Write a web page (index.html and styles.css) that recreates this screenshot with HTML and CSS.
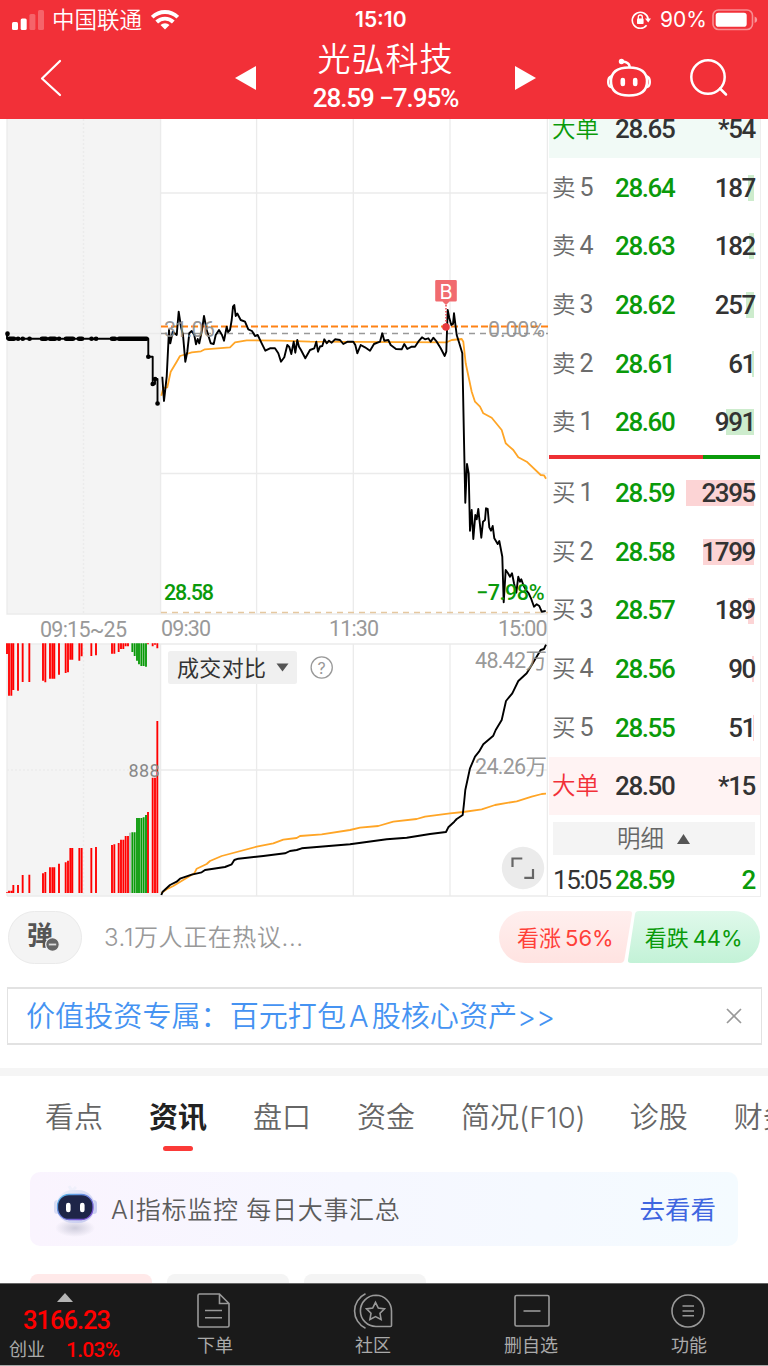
FILE: index.html
```html
<!DOCTYPE html>
<html lang="zh-CN">
<head>
  <meta charset="utf-8">
  <title>光弘科技</title>
  <link rel="stylesheet" href="styles.css">
</head>
<body>
  <header class="header">
    <div class="status">
      <svg class="signal" width="32" height="20" viewBox="0 0 32 20" fill="#fff">
        <rect x="0" y="12" width="6" height="8" rx="1.5"/>
        <rect x="8.7" y="8.5" width="6" height="11.5" rx="1.5"/>
        <rect x="17.4" y="4" width="6" height="16" rx="1.5" opacity=".25"/>
        <rect x="26" y="0" width="6" height="20" rx="1.5" opacity=".25"/>
      </svg>
      <span class="carrier">中国联通</span>
      <svg class="wifi" width="28" height="21" viewBox="0 0 28 21" fill="none" stroke="#fff" stroke-width="3.9">
        <path d="M1.2 8.2A18.3 18.3 0 0 1 26.8 8.2"/>
        <path d="M5.7 13A11.8 11.8 0 0 1 22.3 13"/>
        <path d="M14 20.5L9.5 16A6.4 6.4 0 0 1 18.5 16Z" fill="#fff" stroke="none"/>
      </svg>
      <span class="clock">15:10</span>
      <svg class="lock" width="20" height="20" viewBox="0 0 20 20" fill="none" stroke="#fff" stroke-width="1.6">
        <path d="M15.6 15.2A8 8 0 1 1 17.2 9"/>
        <path d="M14 8.6h6L17.2 12.6z" fill="#fff" stroke="none"/>
        <rect x="6" y="8.6" width="6.6" height="5.4" rx=".8" fill="#fff" stroke="none"/>
        <path d="M7.3 9V7a2 2 0 0 1 4 0v2" stroke-width="1.3"/>
      </svg>
      <span class="percent">90%</span>
      <svg class="battery" width="46" height="22" viewBox="0 0 46 22">
        <rect x="1" y="1" width="39.5" height="19.5" rx="5.5" fill="none" stroke="#fff" stroke-width="1.6" opacity=".45"/>
        <rect x="3.7" y="3.7" width="31" height="14" rx="2.8" fill="#fff"/>
        <path d="M42.6 7.5q2.6 1 2.6 3.3t-2.6 3.3z" fill="#fff" opacity=".5"/>
      </svg>
    </div>
    <div class="nav">
      <svg class="back" width="22" height="38" viewBox="0 0 22 38" fill="none" stroke="#fff" stroke-width="2.2" stroke-linecap="round" stroke-linejoin="round"><path d="M20 2L2 19.5 20 36"/></svg>
      <svg class="prev" width="21" height="24" viewBox="0 0 21 24" fill="#fff"><path d="M0 12L21 0V24z"/></svg>
      <div class="stock">
        <div class="stock-name">光弘科技</div>
        <div class="stock-price">28.59 −7.95%</div>
      </div>
      <svg class="next" width="21" height="24" viewBox="0 0 21 24" fill="#fff"><path d="M21 12L0 0V24z"/></svg>
      <svg class="robot" width="44" height="40" viewBox="0 0 44 40" fill="none" stroke="#fff" stroke-width="2.5" stroke-linecap="round">
        <path d="M22 9.500C34 9.500 40 14 40 23.500S34 37.500 22 37.500 4 33 4 23.500 10 9.500 22 9.500Z"/>
        <path d="M22.500 9V8Q22 4.500 16 3.500"/>
        <circle cx="14.500" cy="3.500" r="2.700" fill="#fff" stroke="none"/>
        <path d="M4 18.500Q1.200 19.500 1.200 24T4 29M40 18.500Q42.800 19.500 42.800 24T40 29" stroke-width="2.400"/>
        <path d="M15.800 22v4M28.200 22v4" stroke-width="4.600"/>
      </svg>
      <svg class="search" width="38" height="38" viewBox="0 0 38 38" fill="none" stroke="#fff" stroke-width="2.5" stroke-linecap="round"><circle cx="18" cy="18" r="16.700"/><path d="M30 29.500L36 35.500"/></svg>
    </div>
  </header>

  <main class="market">
    <svg class="chart" width="548" height="778" viewBox="0 119 548 778">
      <!-- grid -->
      <rect x="7" y="119" width="154" height="495" fill="#f4f4f4"/>
      <rect x="7" y="644" width="154" height="252" fill="#f4f4f4"/>
      <g fill="none" stroke="#ebebeb" stroke-width="1.300">
        <path d="M7 119V614H548M7 333.500H161M161 193H548M161 473.500H548M160.600 119V614M256.600 119V614M353.300 119V614M450 119V614M547.400 119V896"/>
        <path d="M7 896V644H548M7 896H548M161 770H548M160.600 644V896M256.600 644V896M353.300 644V896M450 644V896"/>
        <path d="M83.500 119V614M83.500 644V896M7 770H161" stroke-dasharray="2 2"/>
      </g>

      <!-- call auction -->
      <path d="M7 333V338.800H148.300V356.800H152.700V384H155V379H157.500V403.500" class="line"/>
      <path d="M7.500 333.500V334M9 338.800H14M18 338.800h.1M22.700 338.800h.1M29.500 338.800h.1M42 338.800H46M50 338.800H55M59 338.800h.1M66 338.800H73M79 338.800H82M91.500 338.800h.1M96 338.800h.1M112 338.800H115M119 338.800H146.500M148.300 356.800h.1M152.700 384h.1M155 379h.1M157.500 403.500h.1" class="dots"/>

      <!-- average and price -->
      <path class="dash-orange" d="M161 326.500H548"/>
      <path class="dash-gray" d="M161 333.500H548"/>
      <path class="dash-low" d="M161 612.500H548"/>
      <path class="avg" d="M161.300 395.700L163.300 388 167.300 387.300 170.700 371.700 176.700 361.700 180 356 186.700 354 191.700 352.300 201 351.300 205 349.300 230 347.300 235 342.300 246.700 340.300 280 340.700 310 341.700 446.700 342.300 451.700 340 461.700 339 463.300 341.700 465.700 363.300 471.700 391.700 475 401.700 480 406.700 483.300 413.300 491.700 417.700 501.700 430 505.700 443.300 513.300 450 518.300 457.300 526.700 461.700 540.700 475 544 475.300 546 478.700"/>
      <path class="line" d="M162.300 376.700L164 401 166.700 376.700 169 330 170.300 343.300 172.700 331.700 176.700 335 178.700 311.700 181 327 183 335 185.300 361.700 187.300 351.700 189.300 333.300 191.700 331 194.300 335 196 344.300 197.700 339 199.300 343.300 202 330 204 316 206.700 330 208.700 336.700 210.700 343.300 213.700 344 215.700 335 219 330 222 335 224 340.700 226.700 326.700 228 332 230 330 231.700 320 233 306.700 234.300 305 235.700 316 237.300 313.500 240.700 320 245 321.700 248.300 329.300 252 331 255 336 257.700 335 261.700 343.300 265.300 350.700 270 348.300 275 348.300 278.300 353.300 281 361.700 284.300 357.300 287.300 345 289.300 347 291.300 354 293.700 341.700 295.300 352.700 297.300 340 299 346.700 301 350 305.300 358.300 310 350 314.300 348.300 316.300 341.700 318 351.700 320 346.500 322.300 346 324.300 339.300 326.700 343.300 329 340.700 331.700 342.700 335 339.300 340 340 343.300 344 347.700 341.700 353.300 341.700 355.300 345 357.300 353.300 360.700 345 365 347.300 370 350.700 374 344 380 341.700 382.300 333.300 384.300 340.700 388.300 340 390.700 345 396 349 401.700 349.300 404.300 344 407.300 349 411.700 346.700 415 346.700 418.300 341.700 422 337.300 425 339.300 428.300 338.300 430.700 341.700 433.300 337.700 436.700 341.700 440.700 348.300 444.700 356 446.300 351.700 447.700 310 449.300 318 451.300 325 453 324 454 313.300 456.700 335 459.300 343.300 462.300 353.300 464 440 465.300 502.700 467 464 468.700 473.300 470 530.700 471.700 510 473.300 539 475.300 515 476.700 519.300 478.300 509 481.300 537.700 483 521.700 485 520 486 508.300 487.700 509 489.300 527.300 491 530.700 492.700 526 494.300 538.300 497.700 544 499.300 541 502.300 556.700 503.700 602.300 505.700 570 508 573.300 510 576.700 512 573.300 514 583.300 516.300 592.700 518.300 576.700 520 581.700 521.300 579.300 523.300 585 526 590 528.700 593.300 531 598.300 534 606.700 536.700 604.300 539.300 606 541.700 611.700 545.700 611"/>
      <text x="164" y="337" textLength="51" class="axis over">31.06</text>
      <text x="488" y="337" textLength="57" class="axis over">0.00%</text>
      <text x="164" y="600" textLength="50" class="axis fall">28.58</text>
      <text x="476" y="600" textLength="68.500" class="axis fall">−7.98%</text>

      <!-- buy mark -->
      <path d="M446 305V325" stroke="#e8414a" stroke-width="1.500" stroke-dasharray="1.500 1.500"/>
      <path d="M436.500 280h19q1.300 0 1.300 1.300v19q0 1.300-1.300 1.300h-6l-3.500 3.400-3.500-3.400h-6q-1.300 0-1.300-1.300v-19q0-1.300 1.300-1.300z" fill="#f16b6f"/>
      <circle cx="446" cy="327" r="3.800" fill="#e63a3e"/>
      <text x="446" y="298.500" class="mark">B</text>

      <text x="40" y="637" textLength="87" class="axis">09:15~25</text>
      <text x="161" y="636" textLength="50" class="axis">09:30</text>
      <text x="329" y="636" textLength="50" class="axis">11:30</text>
      <text x="498" y="636" textLength="49.500" class="axis">15:00</text>

      <!-- auction volume, drawn at triple scale -->
      <g transform="translate(0 610) scale(.33333)" fill="none" stroke-width="5.600">
        <path stroke="#f00" d="M21 100V132M27 100V257M34 100V257M40 100V240M54 100V242M68 100V216M88 100V216M129 100V212M136 100V217M150 100V206M157 100V206M163 100V206M177 100V194M197 100V189M204 100V187M211 100V149M217 100V149M238 100V152M245 100V139M274 100V138M288 100V136M336 100V131M343 100V131M356 100V126M363 100V117M370 100V117M377 100V109M384 100V109M444 100V103M458 100V109M465 100V104M472 100V115"/>
        <path stroke="#0a9a0a" d="M397 100V126M404 100V138M411 100V152M417 100V163M424 100V168M431 100V168M438 100V170"/>
        <path stroke="#f00" d="M21 849V847M27 849V842M34 849V842M40 849V825M54 849V825M68 849V795M88 849V794M129 849V790M136 849V786M150 849V772M157 849V772M163 849V772M177 849V761M197 849V757M204 849V752M211 849V714M217 849V714M238 849V714M245 849V714M274 849V714M288 849V711M336 849V705M343 849V703M356 849V699M363 849V689M370 849V689M377 849V678M384 849V678M444 849V606M458 849V503M465 849V503M472 849V333"/>
        <path stroke="#bbb" d="M390 849V668"/>
        <path stroke="#0a9a0a" d="M397 849V667M404 849V667M411 849V624M417 849V624M424 849V624M431 849V622M438 849V615"/>
      </g>
      <text x="128.500" y="777" textLength="31" class="axis small">888</text>

      <!-- volume comparison -->
      <path class="avg" d="M161.300 893L166.700 889.300 173.300 886 194.300 873.300 196.700 868.700 206.700 864 210 861 221.700 856 256.700 846.700 273.300 843.300 283.300 839.700 296.700 838 300 836 321.700 834.300 350 830 360 827.700 378.300 826 393.300 821.700 416.700 819 425 816.700 450 813.300 463.300 812 481.700 809.300 495 805 516.700 801.300 531.700 796.700 541.700 794 546 793.700"/>
      <path class="line" d="M161.300 895L162.700 891.700 170 885 176.700 881.700 180 878.700 191.700 874.700 201.700 872.300 205 870 225 867 231.700 864.300 234.300 860 238.300 858.700 263.300 856 285 853.300 290 851 296.700 850 301.700 848.300 350 844.300 386.700 839.300 406.700 837.700 430 834 446 832 448.300 827.300 454.300 821.700 456.700 819 462.700 815 464 803.300 465.300 790 470 768.300 475 756.700 479 751.700 483.300 744.300 493.300 735.700 495.700 730 501.700 720 506 701 512.300 693.300 518.300 681 526.700 673.300 531.700 665 540.700 650 544 649 546 644.700"/>
      <text x="475" y="667.500" textLength="72" class="axis over">48.42万</text>
      <text x="475" y="774" textLength="72" class="axis over">24.26万</text>

      <rect x="168" y="651" width="129" height="33" rx="2.500" fill="#f0f0f0"/>
      <text x="177" y="676" textLength="89" class="pick">成交对比</text>
      <path d="M276.500 663.500h12l-6 8z" fill="#555"/>
      <circle cx="321.700" cy="667.500" r="10.600" fill="none" stroke="#999" stroke-width="1.300"/>
      <text x="321.700" y="673.500" class="help">?</text>

      <circle cx="523" cy="868" r="21.200" fill="#ebebeb"/>
      <path d="M512.500 867V858.500H522.300M524.300 877.800H533V869" fill="none" stroke="#666" stroke-width="2.200"/>
    </svg>

    <section class="book">
      <div class="row big-sell"><span class="label">大单</span><span class="price">28.65</span><span class="vol">*54</span></div>
      <div class="row sell"><span class="label">卖<i>5</i></span><span class="price">28.64</span><span class="vol">187</span><b class="depth" style="width:6px"></b></div>
      <div class="row sell"><span class="label">卖<i>4</i></span><span class="price">28.63</span><span class="vol">182</span><b class="depth" style="width:5px"></b></div>
      <div class="row sell"><span class="label">卖<i>3</i></span><span class="price">28.62</span><span class="vol">257</span><b class="depth" style="width:8px"></b></div>
      <div class="row sell"><span class="label">卖<i>2</i></span><span class="price">28.61</span><span class="vol">61</span><b class="depth" style="width:2px"></b></div>
      <div class="row sell"><span class="label">卖<i>1</i></span><span class="price">28.60</span><span class="vol">991</span><b class="depth" style="width:28px"></b></div>
      <div class="ratio"><span class="ratio-buy" style="width:73%"></span></div>
      <div class="row buy"><span class="label">买<i>1</i></span><span class="price">28.59</span><span class="vol">2395</span><b class="depth" style="width:68px"></b></div>
      <div class="row buy"><span class="label">买<i>2</i></span><span class="price">28.58</span><span class="vol">1799</span><b class="depth" style="width:51px"></b></div>
      <div class="row buy"><span class="label">买<i>3</i></span><span class="price">28.57</span><span class="vol">189</span><b class="depth" style="width:6px"></b></div>
      <div class="row buy"><span class="label">买<i>4</i></span><span class="price">28.56</span><span class="vol">90</span><b class="depth" style="width:2px"></b></div>
      <div class="row buy"><span class="label">买<i>5</i></span><span class="price">28.55</span><span class="vol">51</span><b class="depth" style="width:1px"></b></div>
      <div class="row big-buy"><span class="label">大单</span><span class="price">28.50</span><span class="vol">*15</span></div>
      <div class="detail"><span>明细</span><svg width="13" height="10" viewBox="0 0 13 10"><path d="M6.500 0L13 10H0z" fill="#555"/></svg></div>
      <div class="row tick"><span class="label">15:05</span><span class="price">28.59</span><span class="vol">2</span></div>
    </section>
  </main>

  <section class="talk">
    <div class="danmu">
      <span class="danmu-text">弹</span>
      <svg class="danmu-off" width="15" height="15" viewBox="0 0 15 15"><circle cx="7.500" cy="7.500" r="6.800" fill="#666" stroke="#f4f4f4" stroke-width="1.200"/><path d="M3.800 7.500h7.400" stroke="#ddd" stroke-width="1.800"/></svg>
    </div>
    <span class="talk-text">3.1万人正在热议...</span>
    <div class="vote">
      <svg class="vote-bg" width="261" height="52" viewBox="0 0 261 52">
        <defs>
          <linearGradient id="up" x1="0" y1="0" x2="0" y2="1"><stop offset="0" stop-color="#ffefee"/><stop offset="1" stop-color="#ffe3e1"/></linearGradient>
          <linearGradient id="down" x1="0" y1="0" x2="0" y2="1"><stop offset="0" stop-color="#e0f9eb"/><stop offset="1" stop-color="#c3f2d7"/></linearGradient>
        </defs>
        <path fill="url(#up)" d="M26 0H130Q133.500 0 133 3L125.500 48Q125 52 121 52H26A26 26 0 0 1 26 0z"/>
        <path fill="url(#down)" d="M140 0H235A26 26 0 0 1 235 52H132Q128.500 52 129 49L136 3Q136.500 0 140 0z"/>
      </svg>
      <span class="vote-up">看涨<i>56%</i></span>
      <span class="vote-down">看跌<i>44%</i></span>
    </div>
  </section>

  <div class="ad">
    <span class="ad-text">价值投资专属：百元打包<i>A</i>股核心资产&gt;&gt;</span>
    <svg width="16" height="16" viewBox="0 0 16 16" stroke="#999" stroke-width="1.700"><path d="M1 1L15 15M15 1L1 15"/></svg>
  </div>

  <nav class="tabs">
    <span>看点</span><span class="active">资讯</span><span>盘口</span><span>资金</span><span class="wide">简况(F10)</span><span>诊股</span><span>财务</span>
  </nav>

  <div class="ai">
    <svg width="46" height="56" viewBox="0 0 46 56">
      <defs>
        <linearGradient id="head" x1="0" y1="0" x2="1" y2="1"><stop offset="0" stop-color="#eef1fb"/><stop offset="1" stop-color="#c3c7ee"/></linearGradient>
        <linearGradient id="rim" x1="0" y1="0" x2="1" y2="1"><stop offset="0" stop-color="#57b9e8"/><stop offset="1" stop-color="#7d3fd0"/></linearGradient>
        <radialGradient id="shade"><stop offset="0" stop-color="#ceccdc"/><stop offset="1" stop-color="#ceccdc" stop-opacity="0"/></radialGradient>
      </defs>
      <ellipse cx="21" cy="47" rx="20" ry="9" fill="url(#shade)"/>
      <path d="M18 10L15 5M18 10L22 6" stroke="#f0f0fb" stroke-width="3"/>
      <rect x="0" y="19" width="7" height="14" rx="3.500" fill="#d8dcf5"/>
      <rect x="36" y="19" width="7" height="14" rx="3.500" fill="#c9cff2"/>
      <rect x="2" y="9" width="39" height="33" rx="16.500" fill="url(#head)"/>
      <rect x="3.500" y="13.500" width="35.500" height="25" rx="11.500" fill="#1e2548" stroke="url(#rim)" stroke-width="1.300"/>
      <path d="M14.300 24v5M28.300 24v5" stroke="#fff" stroke-width="4.600" stroke-linecap="round"/>
    </svg>
    <span class="ai-text">AI指标监控 每日大事汇总</span>
    <a class="ai-link">去看看</a>
  </div>

  <div class="chips"><span class="chip on"></span><span class="chip"></span><span class="chip"></span></div>

  <footer class="bottom">
    <div class="index">
      <svg width="16" height="9" viewBox="0 0 16 9"><path d="M8 0L16 9H0z" fill="#b5b5b5"/></svg>
      <div class="index-value">3166.23</div>
      <div class="index-row"><span>创业</span><b>1.03%</b></div>
    </div>
    <div class="item">
      <svg width="40" height="36" viewBox="0 0 40 36"><path d="M4.500 1H24.500L34 10.500V32.500Q34 34 32.500 34H4.500Q3 34 3 32.500V2.500Q3 1 4.500 1zM24.500 1V10.500H34M10 17.500H27M10 24.800H27"/></svg>
      <span>下单</span>
    </div>
    <div class="item">
      <svg width="40" height="36" viewBox="0 0 40 36"><path d="M23 2.300A15.600 15.600 0 0 0 23 33.500H37.500Q38.500 33.500 38.500 32.500V18A15.600 15.600 0 0 0 23 2.300zM12.500 .8A19 19 0 0 0 12.500 35.200M22.500 9.300L25.300 15 31.500 15.900 27 20.300 28.100 26.500 22.500 23.600 16.900 26.500 18 20.300 13.500 15.900 19.700 15z"/></svg>
      <span>社区</span>
    </div>
    <div class="item">
      <svg width="40" height="36" viewBox="0 0 40 36"><rect x="4" y="2.500" width="34" height="30.500" rx="1.500"/><path d="M12.500 18H29.500"/></svg>
      <span>删自选</span>
    </div>
    <div class="item">
      <svg width="40" height="36" viewBox="0 0 40 36"><circle cx="19" cy="18" r="16"/><path d="M13.500 13H25M13.500 18H25M13.500 22.800H25"/></svg>
      <span>功能</span>
    </div>
  </footer>
</body>
</html>
```
FILE: styles.css
```css
* {
  box-sizing: border-box;
}
body {
  margin: 0;
  width: 768px;
  height: 1366px;
  overflow: hidden;
  display: flex;
  flex-direction: column;
  background: #fff;
  color: #333;
  font-family: Inter, "Noto Sans CJK SC", sans-serif;
}
svg {
  display: block;
  flex: none;
}
i {
  font-style: normal;
}
span {
  white-space: nowrap;
}

/* header */
.header {
  height: 119px;
  background: #f23038;
  color: #fff;
  flex: none;
}
.status {
  height: 39px;
  display: flex;
  align-items: center;
  padding: 0 10px 0 12px;
  font-size: 21px;
}
.carrier {
  margin: -3px 0 0 8px;
  width: 91px;
  font-size: 22.5px;
  font-weight: 350;
}
.wifi {
  margin-left: 8px;
}
.clock {
  margin-left: 176px;
  width: 60px;
  font-size: 21px;
  font-weight: 600;
}
.lock {
  margin-left: 216px;
}
.percent {
  margin-left: 9px;
  width: 49px;
  font-size: 21px;
}
.battery {
  margin-left: 3px;
}
.nav {
  height: 80px;
  display: flex;
  align-items: center;
  padding: 0 0 3px 40px;
}
.prev {
  margin-left: 173px;
}
.stock {
  width: 255px;
  margin: 0 2px;
  text-align: center;
}
.stock-name {
  font-size: 33px;
  line-height: 38px;
  letter-spacing: 1px;
  font-weight: 350;
}
.stock-price {
  padding-top: 2px;
  font-family: Roboto, sans-serif;
  font-size: 26px;
  line-height: 36px;
  font-weight: 500;
  letter-spacing: -1.05px;
}
.robot {
  margin-left: 71px;
}
.search {
  margin-left: 39px;
}

/* chart */
.market {
  height: 778px;
  display: flex;
  overflow: hidden;
  flex: none;
}
.line {
  fill: none;
  stroke: #000;
  stroke-width: 1.9;
  stroke-linejoin: round;
}
.dots {
  fill: none;
  stroke: #000;
  stroke-width: 4.6;
  stroke-linecap: round;
}
.avg {
  fill: none;
  stroke: #ffa526;
  stroke-width: 1.8;
  stroke-linejoin: round;
}
.dash-orange {
  stroke: #ff8214;
  stroke-width: 1.8;
  stroke-dasharray: 7 3;
}
.dash-gray {
  stroke: #999;
  stroke-width: 1.3;
  stroke-dasharray: 6 5;
}
.dash-low {
  stroke: #e5c8a0;
  stroke-width: 1.3;
  stroke-dasharray: 6 5;
}
.axis {
  font-family: Roboto, "Noto Sans CJK SC", sans-serif;
  font-size: 21.5px;
  fill: #999;
}
.axis.over {
  fill: #8c8c8c;
  fill-opacity: .9;
}
.axis.fall {
  fill: #0a9a0a;
  font-weight: 500;
}
.axis.small {
  font-size: 18px;
  fill: #888;
}
.mark {
  font-size: 20px;
  fill: #fff;
  text-anchor: middle;
}
.pick {
  font-size: 22px;
  fill: #333;
}
.help {
  font-size: 16px;
  fill: #999;
  text-anchor: middle;
}

/* order book */
.book {
  width: 213px;
  padding-left: 1px;
  margin-top: -20px;
  border-right: 1px solid #eee;
  border-bottom: 1px solid #eee;
}
.row {
  height: 58.7px;
  display: grid;
  grid-template-columns: 62px 70px 1fr;
  align-items: center;
  padding: 0 4px 0 4px;
  font-family: Roboto, "Noto Sans CJK SC", sans-serif;
  font-size: 26px;
  position: relative;
}
.label {
  margin: -3px 0 0 -1px;
  font-size: 23.5px;
  font-weight: 350;
  color: #6c6c6c;
}
.label i {
  margin-left: 4px;
  font-size: 25px;
  font-weight: 400;
}
.price,
.vol {
  padding-top: 1px;
  font-weight: 500;
  letter-spacing: -1.4px;
}
.vol {
  padding-right: 1px;
  text-align: right;
  z-index: 1;
}
.sell .price,
.buy .price,
.tick .price,
.tick .vol {
  color: #0a9a0a;
}
.depth {
  position: absolute;
  right: 6px;
  top: 17px;
  height: 26px;
  background: #cdeccd;
}
.buy .depth {
  background: #fcd4d5;
}
.big-sell {
  background: #f1faf6;
}
.big-sell .label {
  color: #0a9a0a;
}
.big-buy {
  background: #fff3f3;
}
.big-buy .label {
  color: #f23038;
}
.ratio {
  height: 4px;
  margin: 4px 0;
  background: #0a9a0a;
}
.ratio-buy {
  display: block;
  height: 4px;
  background: #ee3034;
}
.detail {
  height: 33px;
  margin: 7px 5px 0 4px;
  background: #f4f4f4;
  color: #666;
  font-size: 23.5px;
  font-weight: 350;
  display: flex;
  align-items: center;
  justify-content: center;
  gap: 13px;
}
.detail span {
  margin: -3px 0 0 -1px;
}
.tick {
  height: 48px;
}
.tick .label {
  margin: 1px 0 0;
  color: #333;
  font-size: 26px;
  font-weight: 400;
  letter-spacing: -1.4px;
}

/* discussion */
.talk {
  height: 90px;
  padding: 14px 8px 0;
  display: flex;
  flex: none;
}
.danmu {
  width: 74px;
  height: 53px;
  border: 1px solid #eaeaea;
  border-radius: 27px;
  background: #f4f4f4;
  position: relative;
}
.danmu-text {
  display: block;
  margin: 6px 0 0 18px;
  font-size: 26px;
  line-height: 36px;
  font-weight: 700;
  color: #555;
}
.danmu-off {
  position: absolute;
  left: 36px;
  top: 25px;
}
.talk-text {
  margin-left: 22px;
  font-size: 24px;
  line-height: 53px;
  font-weight: 350;
  letter-spacing: 0.6px;
  color: #999;
}
.vote {
  margin-left: auto;
  width: 261px;
  height: 52px;
  position: relative;
  display: flex;
  align-items: center;
  font-size: 22px;
}
.vote-bg {
  position: absolute;
  left: 0;
  top: 0;
}
.vote span {
  position: relative;
  margin-top: -2px;
}
.vote i {
  margin-left: 4px;
}
.vote-up {
  margin-left: 18px;
  color: #ff4038;
}
.vote .vote-down {
  margin-left: 31px;
  color: #0a9a0a;
}

/* banner */
.ad {
  height: 58px;
  margin: 0 6px 0 7px;
  padding: 0 19px 0 18px;
  border: 1px solid #e2e2e2;
  border-width: 2px 1px;
  display: flex;
  align-items: center;
  justify-content: space-between;
  flex: none;
}
.ad-text {
  margin-top: -4px;
  font-size: 29.1px;
  font-weight: 350;
  color: #4593f2;
}
.ad-text i {
  margin: 0 3px;
}

/* tabs */
.tabs {
  height: 104px;
  margin-top: 23px;
  padding: 22px 0 0 45px;
  border-top: 8px solid #f5f5f5;
  display: flex;
  gap: 46px;
  font-size: 29px;
  line-height: 39px;
  font-weight: 350;
  color: #666;
  flex: none;
}
.wide {
  margin-right: -2px;
}
.active {
  color: #222;
  font-weight: 700;
}
.active::after {
  content: "";
  display: block;
  width: 30px;
  height: 5px;
  margin: 9px auto 0;
  border-radius: 3px;
  background: #fb3a38;
}

/* ai entry */
.ai {
  width: 708px;
  height: 74px;
  margin: 0 0 28px 30px;
  padding: 0 22px 0 24px;
  border-radius: 10px;
  background: linear-gradient(90deg, #faf4fe, #f6f7ff 45%, #f4fbff);
  display: flex;
  align-items: center;
  flex: none;
}
.ai-text {
  margin: -3px 0 0 11px;
  font-size: 25px;
  font-weight: 350;
  letter-spacing: 0.7px;
  color: #5c5c5c;
}
.ai-link {
  margin: -3px 0 0 auto;
  font-size: 25.5px;
  color: #3f66e0;
}
.chips {
  height: 10px;
  padding-left: 30px;
  display: flex;
  gap: 15px;
  flex: none;
}
.chip {
  width: 122px;
  border-radius: 8px 8px 0 0;
  background: #f4f4f4;
}
.chip.on {
  background: #ffe9e9;
}

/* bottom bar */
.bottom {
  height: 83px;
  margin-top: -1px;
  border-top: 1px solid #666;
  border-bottom: 1px solid #aaa;
  background: #1a1a1a;
  color: #aaa;
  display: flex;
  flex: none;
}
.index {
  width: 136px;
  padding: 9px 6px 0 9px;
}
.index svg {
  margin-left: 48px;
}
.index-value {
  padding: 1px 0 0 14px;
  font-family: Roboto, sans-serif;
  font-size: 25.5px;
  line-height: 35px;
  font-weight: 500;
  letter-spacing: -1px;
  color: #f00;
}
.index-row {
  display: flex;
  gap: 21px;
  font-size: 18px;
  line-height: 24px;
}
.index-row b {
  font-family: Roboto, sans-serif;
  font-size: 21px;
  font-weight: 500;
  letter-spacing: -0.7px;
  color: #f00;
}
.item {
  width: 158px;
  padding-top: 9px;
  display: flex;
  flex-direction: column;
  align-items: center;
  font-size: 18px;
  line-height: 34px;
}
.item svg {
  fill: none;
  stroke: #999;
  stroke-width: 1.6;
}
```
